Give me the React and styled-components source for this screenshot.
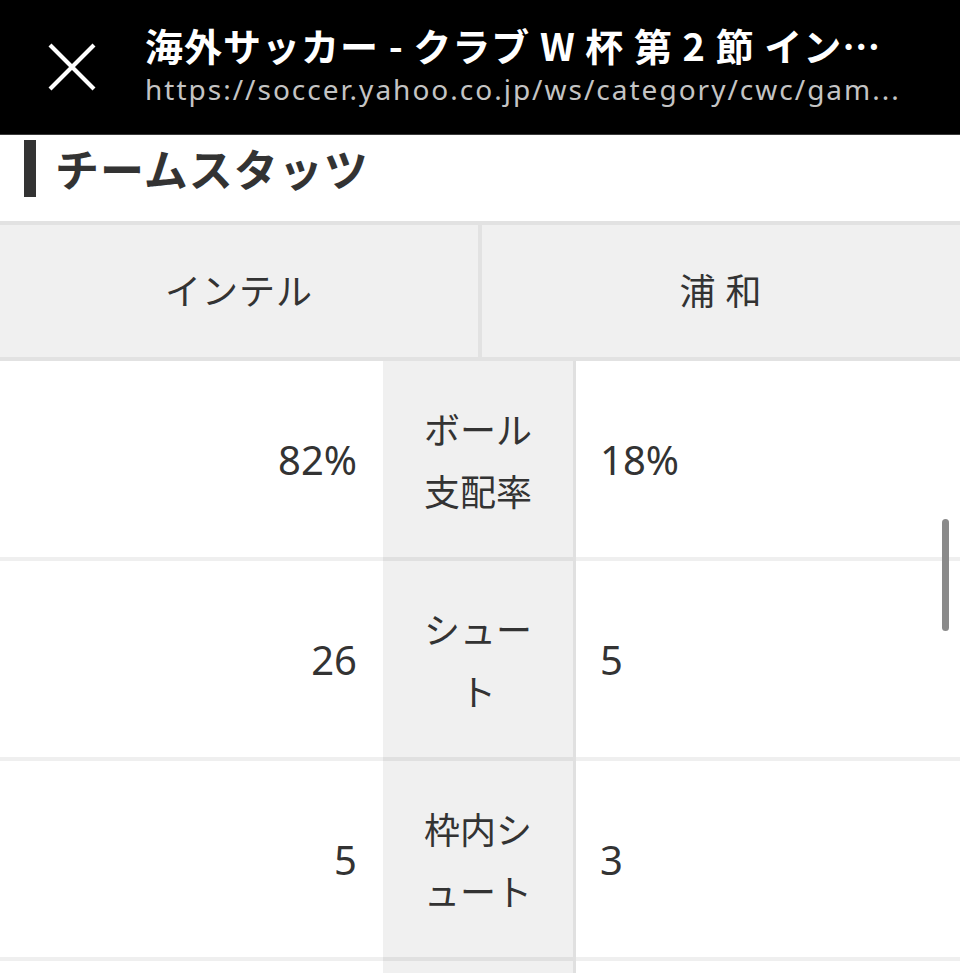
import React from "react";
import styled, { createGlobalStyle } from "styled-components";

const GlobalStyle = createGlobalStyle`
  html, body {
    margin: 0;
    padding: 0;
    background: #ffffff;
  }
  body {
    font-family: "Noto Sans CJK JP", "Noto Sans", sans-serif;
    color: #333333;
  }
`;

const Page = styled.div`
  position: relative;
  width: 960px;
  height: 973px;
  overflow: hidden;
  background: #ffffff;
`;

const TopBar = styled.header`
  height: 135px;
  background: #000000;
  display: flex;
  align-items: center;
  box-sizing: border-box;
  border-bottom: 1px solid #3a3a3a;
`;

const CloseButton = styled.div`
  width: 145px;
  height: 135px;
  display: flex;
  align-items: center;
  justify-content: center;
  flex-shrink: 0;
  padding-right: 2px;
  box-sizing: border-box;
`;

const TitleBlock = styled.div`
  display: flex;
  flex-direction: column;
  gap: 4px;
  min-width: 0;
  padding-bottom: 5px;
`;

const PageTitle = styled.div`
  font-family: "Noto Sans CJK JP", sans-serif;
  font-weight: 700;
  font-size: 38px;
  line-height: 44px;
  color: #ffffff;
  white-space: nowrap;
  letter-spacing: 1px;
`;

const PageUrl = styled.div`
  font-family: "Noto Sans", "Open Sans", sans-serif;
  font-size: 28px;
  line-height: 36px;
  color: #c4c4c4;
  white-space: nowrap;
  letter-spacing: 2px;
`;

const SectionHeading = styled.h2`
  margin: 0;
  padding: 5px 0 0 24px;
  height: 86px;
  box-sizing: border-box;
  display: flex;
  align-items: flex-start;
  gap: 19px;
`;

const HeadingBar = styled.span`
  width: 12px;
  height: 57px;
  background: #333333;
  flex-shrink: 0;
`;

const HeadingText = styled.span`
  font-family: "Noto Sans CJK JP", sans-serif;
  font-weight: 700;
  font-size: 44px;
  line-height: 57px;
  color: #333333;
  letter-spacing: 1px;
`;

const StatsTable = styled.div`
  border-top: 4px solid #e2e2e2;
`;

const TeamRow = styled.div`
  display: grid;
  grid-template-columns: 1fr 4px 1fr;
  height: 132px;
  border-bottom: 4px solid #e2e2e2;
  background: #f0f0f0;
`;

const TeamCell = styled.div`
  display: flex;
  align-items: center;
  justify-content: center;
  padding-bottom: 5px;
  font-size: 36px;
  color: #333333;
  letter-spacing: 1px;
`;

const TeamDivider = styled.div`
  background: #e2e2e2;
`;

const StatRow = styled.div`
  display: grid;
  grid-template-columns: 383px 193px 1fr;
  height: 200px;
`;

const ValueCell = styled.div`
  display: flex;
  align-items: center;
  justify-content: ${(p) => (p.$side === "left" ? "flex-end" : "flex-start")};
  padding: ${(p) => (p.$side === "left" ? "0 26px 0 0" : "0 0 0 24px")};
  border-bottom: 4px solid #efefef;
  font-family: "Noto Sans", "Noto Sans CJK JP", sans-serif;
  font-size: 40px;
  color: #333333;
  box-sizing: border-box;
`;

const LabelCell = styled.div`
  display: flex;
  align-items: center;
  justify-content: center;
  background: #f0f0f0;
  border-right: 3px solid #e0e0e0;
  border-bottom: 4px solid #e0e0e0;
  box-sizing: border-box;
`;

const LabelText = styled.div`
  width: 118px;
  font-size: 36px;
  line-height: 62px;
  text-align: center;
  color: #333333;
  line-break: normal;
  word-break: break-all;
`;

const Scrollbar = styled.div`
  position: absolute;
  right: 11px;
  top: 519px;
  width: 7px;
  height: 112px;
  border-radius: 4px;
  background: #8a8a8a;
`;

const stats = [
  { left: "82%", label: "ボール支配率", right: "18%" },
  { left: "26", label: "シュート", right: "5" },
  { left: "5", label: "枠内シュート", right: "3" },
];

function CloseIcon() {
  return (
    <svg width="48" height="48" viewBox="0 0 48 48" aria-label="閉じる">
      <path
        d="M2 2 L46 46 M46 2 L2 46"
        stroke="#ffffff"
        strokeWidth="4.2"
        strokeLinecap="butt"
        fill="none"
      />
    </svg>
  );
}

export default function App() {
  return (
    <>
      <GlobalStyle />
      <Page>
        <TopBar>
          <CloseButton>
            <CloseIcon />
          </CloseButton>
          <TitleBlock>
            <PageTitle>海外サッカー - クラブ W 杯 第 2 節 イン…</PageTitle>
            <PageUrl>https://soccer.yahoo.co.jp/ws/category/cwc/gam...</PageUrl>
          </TitleBlock>
        </TopBar>

        <SectionHeading>
          <HeadingBar />
          <HeadingText>チームスタッツ</HeadingText>
        </SectionHeading>

        <StatsTable>
          <TeamRow>
            <TeamCell>インテル</TeamCell>
            <TeamDivider />
            <TeamCell>浦 和</TeamCell>
          </TeamRow>
          {stats.map((s) => (
            <StatRow key={s.label}>
              <ValueCell $side="left">{s.left}</ValueCell>
              <LabelCell>
                <LabelText>{s.label}</LabelText>
              </LabelCell>
              <ValueCell $side="right">{s.right}</ValueCell>
            </StatRow>
          ))}
          <StatRow aria-hidden="true">
            <ValueCell $side="left" />
            <LabelCell />
            <ValueCell $side="right" />
          </StatRow>
        </StatsTable>

        <Scrollbar />
      </Page>
    </>
  );
}
